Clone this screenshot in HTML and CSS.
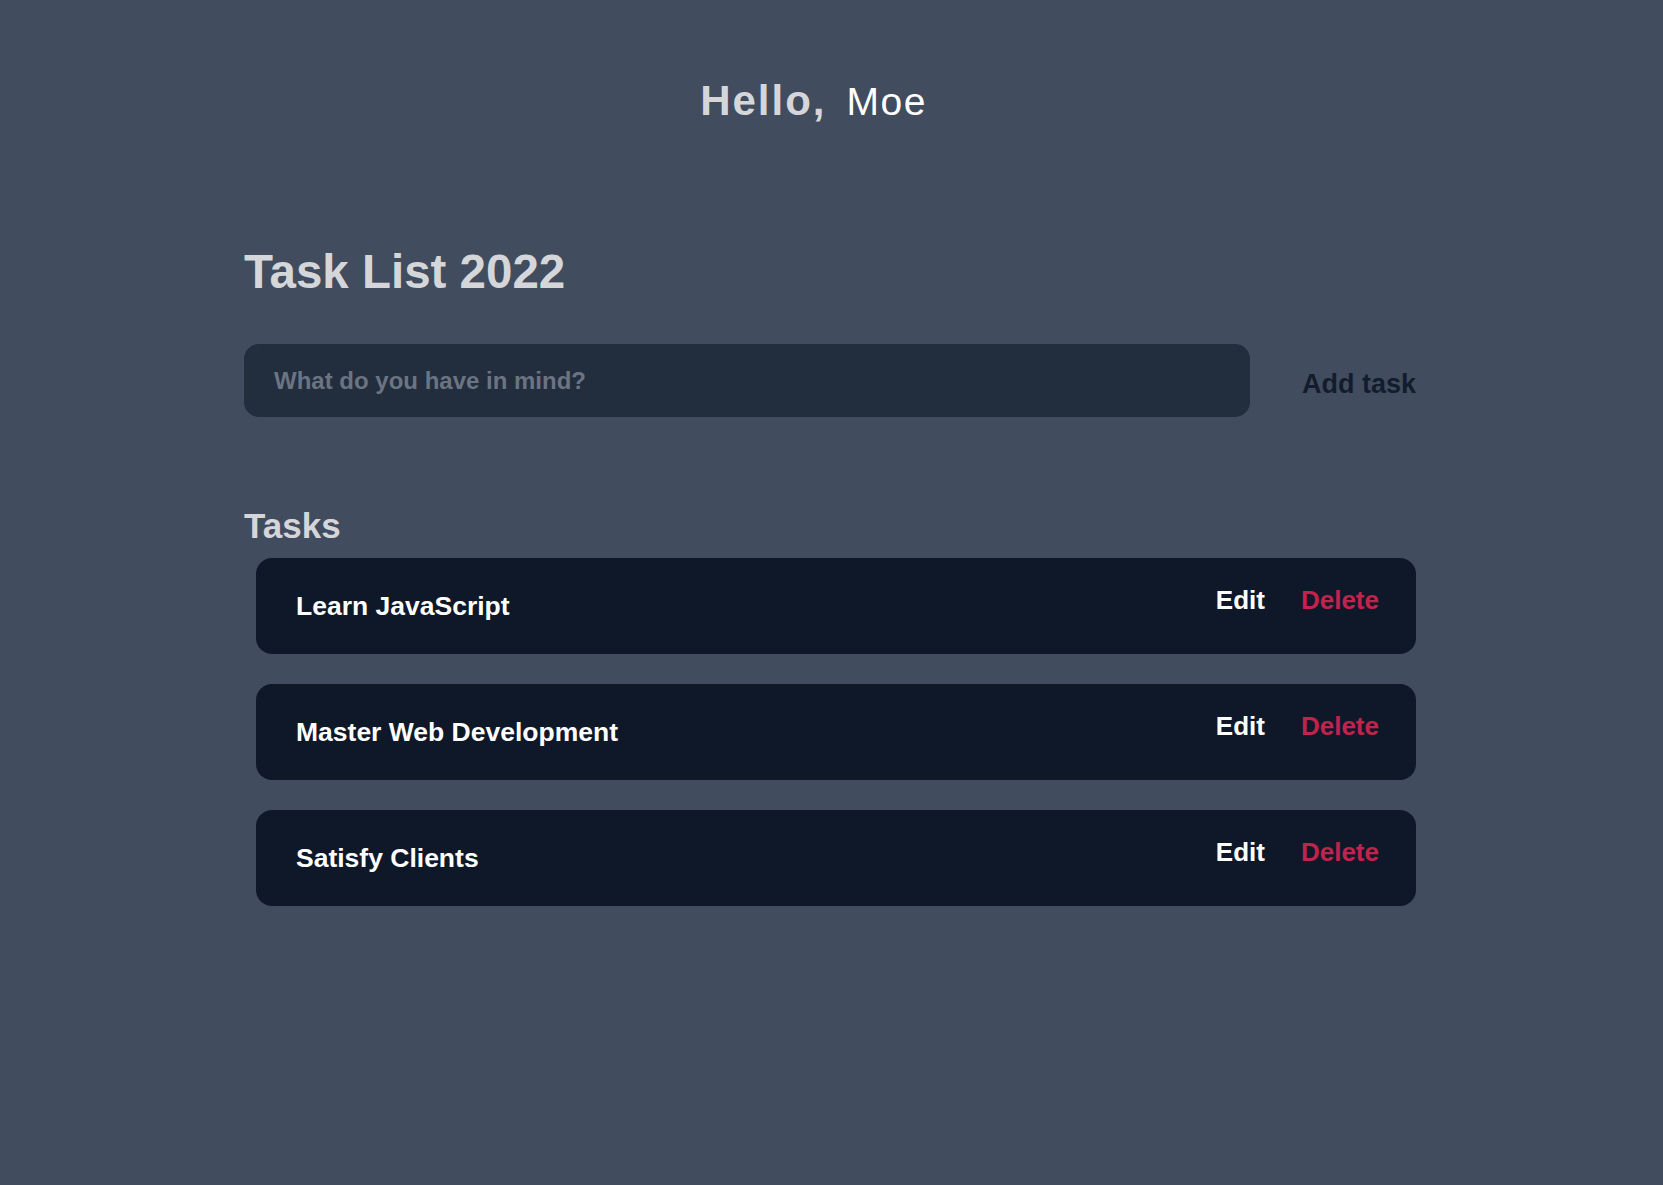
FILE: index.html
```html
<!DOCTYPE html>
<html lang="en">
<head>
<meta charset="utf-8">
<title>Task List 2022</title>
<link rel="stylesheet" href="styles.css">
</head>
<body>
<header class="greeting">
  <span class="hello">Hello,</span>
  <span class="name">Moe</span>
</header>
<main class="container">
  <h1 class="title">Task List 2022</h1>
  <form class="add-row">
    <input class="task-input" type="text" placeholder="What do you have in mind?">
    <button class="add-btn" type="button">Add task</button>
  </form>
  <h2 class="tasks-heading">Tasks</h2>
  <ul class="task-list">
    <li class="task">
      <span class="task-name">Learn JavaScript</span>
      <div class="actions"><button class="edit" type="button">Edit</button><button class="delete" type="button">Delete</button></div>
    </li>
    <li class="task">
      <span class="task-name">Master Web Development</span>
      <div class="actions"><button class="edit" type="button">Edit</button><button class="delete" type="button">Delete</button></div>
    </li>
    <li class="task">
      <span class="task-name">Satisfy Clients</span>
      <div class="actions"><button class="edit" type="button">Edit</button><button class="delete" type="button">Delete</button></div>
    </li>
  </ul>
</main>
</body>
</html>
```

FILE: styles.css
```css
html, body {
  margin: 0;
  padding: 0;
}
body {
  background: #414c5e;
  min-height: 100vh;
  font-family: "Liberation Sans", Arial, Helvetica, sans-serif;
}
.greeting {
  display: flex;
  justify-content: center;
  align-items: baseline;
  gap: 20px;
  padding-top: 78px;
  padding-right: 36px;
  line-height: 46px;
}
.hello {
  font-size: 42px;
  font-weight: 700;
  color: #d4d6da;
  letter-spacing: 2px;
}
.name {
  font-size: 39px;
  font-weight: 400;
  color: #ffffff;
  letter-spacing: 1.5px;
}
.container {
  width: 1172px;
  margin: 0 0 0 calc((100% - 1175px) / 2);
}
.title {
  margin: 120px 0 0;
  font-size: 47.5px;
  line-height: 54px;
  font-weight: 700;
  color: #d4d6da;
}
.add-row {
  margin-top: 45px;
  display: flex;
  align-items: center;
}
.task-input {
  box-sizing: border-box;
  width: 1006px;
  height: 73px;
  border: none;
  border-radius: 15px;
  background: #222d3e;
  padding: 0 30px;
  font-family: inherit;
  font-size: 24px;
  font-weight: 700;
  color: #e5e7eb;
  outline: none;
}
.task-input::placeholder {
  color: #6b7483;
}
.add-btn {
  margin-left: auto;
  margin-top: 8px;
  background: none;
  border: none;
  padding: 0;
  font-family: inherit;
  font-size: 27px;
  font-weight: 700;
  color: #131c2d;
  cursor: pointer;
}
.tasks-heading {
  margin: 89px 0 0;
  font-size: 35px;
  line-height: 40px;
  font-weight: 700;
  color: #d4d6da;
}
.task-list {
  list-style: none;
  margin: 12px 0 0 12px;
  padding: 0;
  display: flex;
  flex-direction: column;
  gap: 30px;
}
.task {
  box-sizing: border-box;
  height: 96px;
  border-radius: 16px;
  background: #0f1829;
  display: flex;
  align-items: flex-start;
  padding: 27px 37px 0 40px;
}
.task-name {
  margin-top: 6px;
  font-size: 26.5px;
  line-height: 30px;
  font-weight: 700;
  color: #ffffff;
}
.actions {
  margin-left: auto;
  display: flex;
  gap: 36px;
}
.actions button {
  background: none;
  border: none;
  padding: 0;
  font-family: inherit;
  font-size: 26px;
  line-height: 30px;
  font-weight: 700;
  cursor: pointer;
}
.edit {
  color: #ffffff;
}
.delete {
  color: #c0234b;
}
```
